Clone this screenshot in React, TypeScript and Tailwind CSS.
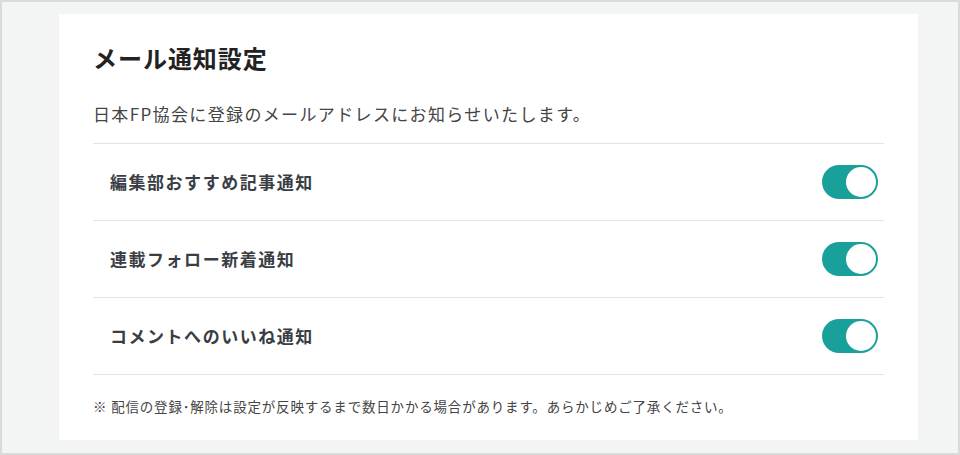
import { useState } from "react";

const items = ["編集部おすすめ記事通知", "連載フォロー新着通知", "コメントへのいいね通知"];

const Toggle = ({ on, onClick }: { on: boolean; onClick: () => void }) => (
  <button
    onClick={onClick}
    className={`flex h-[34px] w-[56px] items-center rounded-full p-[2px] ${on ? "justify-end bg-[#19a09a]" : "justify-start bg-gray-300"}`}
  >
    <span className="h-[30px] w-[30px] rounded-full bg-white" />
  </button>
);

const App = () => {
  const [state, setState] = useState([true, true, true]);

  return (
    <div
      className="h-[455px] w-[960px] border-2 border-[#d9dbdb] bg-[#f3f4f4] pl-[57px] pr-[40px] pt-[12px]"
      style={{ fontFamily: '"Noto Sans CJK JP", "Noto Sans", sans-serif' }}
    >
      <div className="h-[426px] w-[859px] bg-white px-[34px] pt-[26px]">
        <h1 className="text-[24px] font-bold leading-[36px] tracking-[0.04em] text-[#222]">メール通知設定</h1>
        <p className="mt-[26px] text-[17px] leading-[24px] tracking-[0.08em] text-[#444]">
          日本FP協会に登録のメールアドレスにお知らせいたします。
        </p>
        <ul className="mt-[17px] border-t border-[#e3e4e4]">
          {items.map((label, i) => (
            <li
              key={label}
              className="flex h-[77px] items-center justify-between border-b border-[#e3e4e4] pl-[17px] pr-[6px]"
            >
              <span className="text-[17px] font-bold tracking-[0.09em] text-[#3a3e44]">{label}</span>
              <Toggle
                on={state[i]}
                onClick={() => setState((s) => s.map((v, j) => (j === i ? !v : v)))}
              />
            </li>
          ))}
        </ul>
        <p className="mt-[21px] text-[13.5px] leading-[20px] tracking-[0.06em] text-[#444]">
          ※ 配信の登録･解除は設定が反映するまで数日かかる場合があります。あらかじめご了承ください。
        </p>
      </div>
    </div>
  );
};

export default App;
